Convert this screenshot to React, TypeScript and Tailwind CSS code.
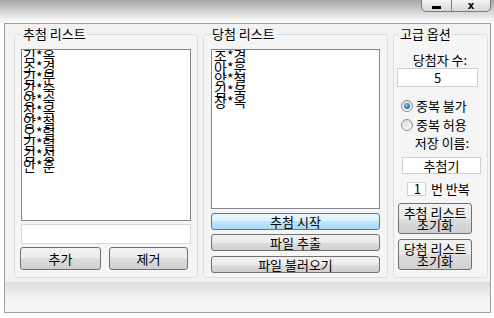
const drawList = ["김*옥", "조*경", "김*문", "강*숙", "양*숙", "장*옥", "양*철", "오*렬", "김*렬", "김*성", "안*훈"];
const winnerList = ["조*경", "아*훈", "양*철", "김*욱", "장*옥"];

const btn =
  "flex items-center justify-center rounded-[3px] border border-[#707070] bg-[linear-gradient(#f2f2f2,#ebebeb_50%,#dddddd_50%,#cfcfcf)] text-[13px] leading-[12px] text-black";

const Radio = ({ checked, label }: { checked?: boolean; label: string }) => (
  <div className="flex items-center h-[13px] pl-[7px]">
    <div className="flex items-center justify-center w-[12px] h-[12px] rounded-full border border-[#8e8f8f] bg-[linear-gradient(#dcdcdc,#f6f6f6)]">
      {checked && <div className="w-[6px] h-[6px] rounded-full bg-[radial-gradient(circle_at_40%_35%,#7fd0f5,#1d6ba6_70%,#184d7a)]" />}
    </div>
    <span className="ml-[3px] text-[13px] leading-[13px]">{label}</span>
  </div>
);

const App: React.FC = () => {
  return (
    <div className="w-[494px] h-[318px] bg-white text-black font-['Noto_Sans_CJK_KR',sans-serif] overflow-hidden">
      {/* title bar */}
      <div className="h-[23px] bg-[linear-gradient(#a6a6a6,#e6e6e6_70%,#fbfbfb)] flex justify-end pr-[3px]">
        <div className="flex h-[13px] -mt-[1px]">
          <div className="w-[31px] h-full border border-[#7a7a7a] rounded-bl-[5px] bg-[linear-gradient(#f4f4f4,#d6d6d6)] flex items-center justify-center">
            <div className="w-[9px] h-[3px] bg-black mt-[4px]" />
          </div>
          <div className="w-[39px] h-full border border-l-0 border-[#7a7a7a] rounded-br-[5px] bg-[linear-gradient(#f4f4f4,#d6d6d6)] flex items-center justify-center">
            <span className="text-[10px] leading-[10px] font-bold font-['DejaVu_Sans',sans-serif] mt-[1px]">x</span>
          </div>
        </div>
      </div>

      {/* main panel */}
      <div className="ml-[4px] w-[487px] h-[290px] border border-[#a0a0a0] flex flex-col">
        <div className="h-[258px] bg-[#f2f2f2] flex gap-[5px] pl-[9px] pt-[3px]">
          {/* 추첨 리스트 */}
          <fieldset className="w-[184px] h-[251px] border border-[#d5dfe5] rounded-[3px] bg-[#f5f5f5] px-[6px]">
            <legend className="ml-[1px] px-[1px] text-[13px] leading-[14px]">추첨 리스트</legend>
            <div className="mt-[8px] h-[172px] border border-[#828790] bg-white pl-[1px] text-[14px] leading-[11px]">
              {drawList.map((n, i) => (
                <div key={i}>{n}</div>
              ))}
            </div>
            <div className="mt-[3px] h-[20px] border border-[#dadada] bg-white" />
            <div className="mt-[3px] flex gap-[8px] -ml-[1px]">
              <button className={`${btn} w-[81px] h-[23px]`}>추가</button>
              <button className={`${btn} w-[79px] h-[23px]`}>제거</button>
            </div>
          </fieldset>

          {/* 당첨 리스트 */}
          <fieldset className="w-[185px] h-[251px] border border-[#d5dfe5] rounded-[3px] bg-[#f5f5f5] px-[7px]">
            <legend className="ml-[0px] px-[1px] text-[13px] leading-[14px]">당첨 리스트</legend>
            <div className="mt-[8px] h-[160px] border border-[#828790] bg-white pl-[2px] text-[14px] leading-[11.5px]">
              {winnerList.map((n, i) => (
                <div key={i}>{n}</div>
              ))}
            </div>
            <button className="mt-[4px] w-full h-[17px] flex items-center justify-center rounded-[3px] border border-[#3c7fb1] bg-[linear-gradient(#eaf6fd,#d9f0fc_50%,#bee6fd_50%,#a7d9f5)] text-[13px] leading-[12px]">
              추첨 시작
            </button>
            <button className={`${btn} mt-[4px] w-full h-[17px]`}>파일 추출</button>
            <button className={`${btn} mt-[5px] w-full h-[17px]`}>파일 불러오기</button>
          </fieldset>

          {/* 고급 옵션 */}
          <fieldset className="w-[95px] h-[251px] border border-[#d5dfe5] rounded-[3px] bg-[#f5f5f5]">
            <legend className="ml-[5px] px-[1px] text-[13px] leading-[14px]">고급 옵션</legend>
            <div className="mt-[12px] text-center text-[13px] leading-[14px] pr-[1px]">당첨자 수:</div>
            <div className="mt-[1px] ml-[3px] w-[81px] h-[19px] border border-[#cfcfcf] bg-white text-center text-[13px] leading-[17px]">
              5
            </div>
            <div className="mt-[12px] flex flex-col gap-[6px]">
              <Radio checked label="중복 불가" />
              <Radio label="중복 허용" />
            </div>
            <div className="mt-[5px] text-center text-[13px] leading-[14px] pl-[3px]">저장 이름:</div>
            <div className="mt-[7px] ml-[8px] w-[79px] h-[17px] border border-[#cfcfcf] bg-white text-center text-[13px] leading-[15px]">
              추첨기
            </div>
            <div className="mt-[8px] flex items-center">
              <div className="ml-[13px] w-[19px] h-[14px] border border-[#cfcfcf] bg-white text-right pr-[4px] text-[13px] leading-[12px]">
                1
              </div>
              <span className="ml-[5px] text-[13px] leading-[14px]">번 반복</span>
            </div>
            <button className={`${btn} mt-[7px] ml-[4px] w-[74px] h-[31px] flex-col`}>
              <span className="whitespace-nowrap">추첨 리스트</span>
              <span>초기화</span>
            </button>
            <button className={`${btn} mt-[5px] ml-[4px] w-[74px] h-[31px] flex-col`}>
              <span className="whitespace-nowrap">당첨 리스트</span>
              <span>초기화</span>
            </button>
          </fieldset>
        </div>
        <div className="flex-1 bg-[linear-gradient(#dedede,#f3f3f3_60%,#f7f7f7)]" />
      </div>
    </div>
  );
};

export default App;
